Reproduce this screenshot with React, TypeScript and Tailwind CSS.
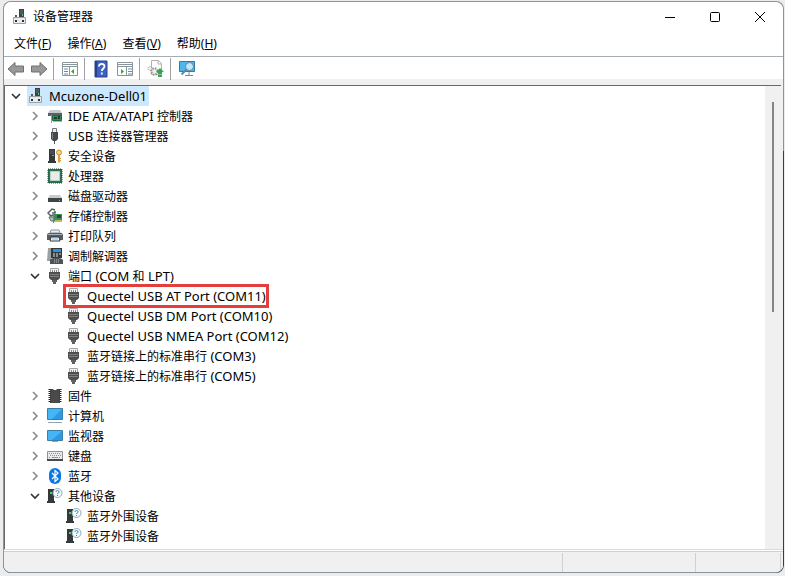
import React from 'react';

type IconName =
  | 'computerDevice'
  | 'ide'
  | 'usb'
  | 'security'
  | 'cpu'
  | 'disk'
  | 'storage'
  | 'printer'
  | 'modem'
  | 'port'
  | 'firmware'
  | 'computer'
  | 'monitor'
  | 'keyboard'
  | 'bluetooth'
  | 'unknown';

interface TreeItem {
  id: string;
  label: string;
  icon: IconName;
  highlighted?: boolean;
  children?: TreeItem[];
}

const devices: TreeItem[] = [
  { id: 'ide', label: 'IDE ATA/ATAPI 控制器', icon: 'ide' },
  { id: 'usb', label: 'USB 连接器管理器', icon: 'usb' },
  { id: 'security', label: '安全设备', icon: 'security' },
  { id: 'cpu', label: '处理器', icon: 'cpu' },
  { id: 'disk', label: '磁盘驱动器', icon: 'disk' },
  { id: 'storage', label: '存储控制器', icon: 'storage' },
  { id: 'printer', label: '打印队列', icon: 'printer' },
  { id: 'modem', label: '调制解调器', icon: 'modem' },
  {
    id: 'ports',
    label: '端口 (COM 和 LPT)',
    icon: 'port',
    children: [
      { id: 'com11', label: 'Quectel USB AT Port (COM11)', icon: 'port', highlighted: true },
      { id: 'com10', label: 'Quectel USB DM Port (COM10)', icon: 'port' },
      { id: 'com12', label: 'Quectel USB NMEA Port (COM12)', icon: 'port' },
      { id: 'com3', label: '蓝牙链接上的标准串行 (COM3)', icon: 'port' },
      { id: 'com5', label: '蓝牙链接上的标准串行 (COM5)', icon: 'port' },
    ],
  },
  { id: 'firmware', label: '固件', icon: 'firmware' },
  { id: 'computer', label: '计算机', icon: 'computer' },
  { id: 'monitor', label: '监视器', icon: 'monitor' },
  { id: 'keyboard', label: '键盘', icon: 'keyboard' },
  { id: 'bluetooth', label: '蓝牙', icon: 'bluetooth' },
  {
    id: 'other',
    label: '其他设备',
    icon: 'unknown',
    children: [
      { id: 'bt1', label: '蓝牙外围设备', icon: 'unknown' },
      { id: 'bt2', label: '蓝牙外围设备', icon: 'unknown' },
    ],
  },
];

const menus = [
  { text: '文件', hotkey: 'F' },
  { text: '操作', hotkey: 'A' },
  { text: '查看', hotkey: 'V' },
  { text: '帮助', hotkey: 'H' },
];

const iconShapes: Record<IconName, React.ReactNode> = {
  computerDevice: (
    <>
      <path d="M7 0h5v8H7z" fill="#3c4247" />
      <path d="M8 2h3M8 4h3" stroke="#6b7277" />
      <path d="M10 5h1v2h-1z" fill="#44d26b" />
      <path d="M3 6h2v3H3z" fill="#555b60" />
      <path d="M1.500 8.500h12v6h-12z" fill="#e9ebec" stroke="#9aa0a4" />
      <path d="M3 11h2v2H3zM10 11h2v2h-2z" fill="#2f3437" />
    </>
  ),
  ide: (
    <>
      <path d="M3 2h10l2 3H1z" fill="#c4c9cc" />
      <path d="M1 5h14v3H1z" fill="#5b6267" />
      <path d="M5.500 7.500h9v5h-9z" fill="#2f8f5b" stroke="#216843" />
      <path d="M7 9h3v2H7zM11 8h2v3h-2z" fill="#1d3d2c" />
      <path d="M6 13h9v1H6z" fill="#d3b64b" />
      <path d="M4 7h1v8H4z" fill="#9aa0a4" />
    </>
  ),
  usb: (
    <>
      <path d="M5.500.5h4v4h-4z" fill="#eee" stroke="#777" />
      <path d="M4 4h7v7l-2 2H6l-2-2z" fill="#44484b" />
      <path d="M5 5h1v6H5z" fill="#7f8487" />
      <path d="M7 13h1v3H7z" fill="#555" />
    </>
  ),
  security: (
    <>
      <path d="M2 1h6v12H2zM1 13h8v2H1z" fill="#34393c" />
      <path d="M3 3h4M3 5h4" stroke="#5d6468" />
      <path d="M5 7h2v1H5z" fill="#44d26b" />
      <circle cx="12" cy="4.500" r="2.500" fill="#f6d37a" stroke="#c8922d" />
      <path d="M11 7h2v7l-1 1-1-1z" fill="#d9a441" />
      <path d="M13 10h1v1h-1zM13 12h1v1h-1z" fill="#c8922d" />
    </>
  ),
  cpu: (
    <>
      <path d="M1 1h14v14H1z" fill="#2f7350" />
      <path d="M1 1h14v14H1z" fill="none" stroke="#1d4d35" strokeDasharray="1 1" />
      <path d="M3.500 3.500h9v9h-9z" fill="#e8ebec" stroke="#b8d0c4" />
    </>
  ),
  disk: (
    <>
      <path d="M3 7h10l2 3H1z" fill="#c8cbcd" />
      <path d="M1 10h14v4H1z" fill="#3f4447" />
      <path d="M12 12h1v1h-1z" fill="#5be07f" />
    </>
  ),
  storage: (
    <>
      <path d="M8 2 5 1 1 5l3 3 2-1M5 5h3V3" fill="none" stroke="#555c60" strokeWidth="1.500" />
      <path d="M2 9h5l2 4H4z" fill="#b7bdc0" stroke="#63696d" />
      <path d="M7 6h8v7H7z" fill="#3b8d5e" />
      <path d="M10 7h4v3h-4z" fill="#1d4d35" />
      <path d="M8 12h7v2H8z" fill="#d3b64b" />
      <path d="M6 6h1v9H6z" fill="#7a8185" />
    </>
  ),
  printer: (
    <>
      <path d="M4 2h8l1 3H3z" fill="#e4edf2" stroke="#8d9498" />
      <path d="M1 5h14l1 2v5H0V7z" fill="#565c60" />
      <path d="M1 6.500h14" stroke="#a9afb3" />
      <path d="M4 9h8l1 4H3z" fill="#f6f8f9" stroke="#34393c" />
      <path d="M5 11h6" stroke="#7eb8dd" />
    </>
  ),
  modem: (
    <>
      <path d="M4 0h11v10H4z" fill="#34393c" />
      <path d="M1 0h3v13H0z" fill="#9aa1a5" />
      <path d="M6 1h8v3H6z" fill="#2e8fe0" />
      <path d="M6 6h2M9 6h2M12 6h2M6 8h2M9 8h2" stroke="#dde1e3" />
      <path d="M3 12c1-3 11-3 13 0v4H3z" fill="#4d5357" />
      <path d="M7 12h5M7 14h5" stroke="#b8bec1" strokeDasharray="1 1" />
    </>
  ),
  port: (
    <>
      <path d="M3.500.5h8v4h-8z" fill="#f4f4f4" stroke="#a5a5a5" />
      <path d="M5 2h1v2H5zM7 2h1v2H7zM9 2h1v2H9z" fill="#888" />
      <path d="M2 4h11v6l-2 2H4l-2-2z" fill="#4e4e4e" />
      <path d="M3 6.500h9M3 8.500h9" stroke="#808080" />
      <path d="M5 12h5v2H5zM6 14h3v2H6z" fill="#606060" />
    </>
  ),
  firmware: (
    <>
      <path d="M3 1h3l1 1h2l1-1h3v14H3z" fill="#4a4a4a" />
      <path d="M2.500 1v14M13.500 1v14" stroke="#222" strokeWidth="2" strokeDasharray="1 1" />
    </>
  ),
  computer: (
    <>
      <path d="M.5.5h15v11H.5z" fill="#45b5f5" stroke="#3c7ea5" />
      <path d="M15 1v10H5z" fill="#2a9ae8" />
      <path d="M1 14.500h14" stroke="#90a4ae" />
    </>
  ),
  monitor: (
    <>
      <path d="M.5 2.500h15v10H.5z" fill="#45b5f5" stroke="#3c7ea5" />
      <path d="M15 3v9H5z" fill="#2a9ae8" />
      <path d="M5 13.500h6" stroke="#90a4ae" />
    </>
  ),
  keyboard: (
    <>
      <path d="M.5 3.500h15v8H.5z" fill="#e8eaeb" stroke="#8d9498" />
      <path d="M2 5.500h12M3 7.500h11M2 9.500h2M12 9.500h2" stroke="#8d9498" strokeDasharray="1 1" />
      <path d="M5 9.500h6" stroke="#8d9498" />
      <path d="M0 11h16v2H0z" fill="#454b4f" />
    </>
  ),
  bluetooth: (
    <>
      <rect x="2" y="0" width="12" height="16" rx="6" fill="#0a78e6" />
      <path d="m5 5 6 6-3 2.500v-11L11 5l-6 6" fill="none" stroke="#fff" strokeWidth="1.200" />
    </>
  ),
  unknown: (
    <>
      <path d="M1 1h6v12H1zM0 13h8v2H0z" fill="#34393c" />
      <path d="M3 4h2v2H3z" fill="#44d26b" />
      <circle cx="10.500" cy="5" r="4.500" fill="#f4fafd" stroke="#8fa9b8" />
      <path d="M9 4c0-2 3-2 3 0 0 1-1.500 1-1.500 2M10.500 7v1" fill="none" stroke="#2c7cae" />
    </>
  ),
};

const DeviceIcon: React.FC<{ name: IconName }> = ({ name }) => (
  <svg viewBox="0 0 16 16" className="w-4 h-4 shrink-0" aria-hidden="true">
    {iconShapes[name]}
  </svg>
);

const Chevron: React.FC<{ open?: boolean }> = ({ open }) => (
  <svg viewBox="0 0 12 12" className="w-3 h-3" fill="none" aria-hidden="true">
    {open ? (
      <path d="m2 4 4 4 4-4" stroke="#303030" strokeWidth="1.600" />
    ) : (
      <path d="m4 2 4 4-4 4" stroke="#8a8a8a" strokeWidth="1.600" />
    )}
  </svg>
);

// Latin runs are set one size larger than the Chinese ones
const Label: React.FC<{ text: string }> = ({ text }) => (
  <span className="whitespace-pre text-xs leading-5">
    {text.split(/([\u4e00-\u9fff]+)/).map((part, i) =>
      i % 2 ? part : <span key={i} className="text-[13px]">{part}</span>
    )}
  </span>
);

const TreeRow: React.FC<{ item: TreeItem; open: boolean; onToggle: (id: string) => void }> = ({
  item,
  open,
  onToggle,
}) => (
  <li>
    <div className="flex items-center h-5">
      <button
        aria-label={item.label}
        aria-expanded={open}
        onClick={() => onToggle(item.id)}
        className="w-5 flex justify-center mr-[2px]"
      >
        <Chevron open={open} />
      </button>
      <DeviceIcon name={item.icon} />
      <span className="ml-[5px] flex">
        <Label text={item.label} />
      </span>
    </div>
    {open && item.children && (
      <ul className="pl-[38px]">
        {item.children.map((child) => (
          <li key={child.id} className="flex h-5">
            <div
              className={
                child.highlighted
                  ? 'flex items-center gap-[5px] px-[3px] -my-[2px] outline-3 -outline-offset-3 outline-[#e53c3c]'
                  : 'flex items-center gap-[5px] px-[3px]'
              }
            >
              <DeviceIcon name={child.icon} />
              <Label text={child.label} />
            </div>
          </li>
        ))}
      </ul>
    )}
  </li>
);

const Divider = () => <span className="w-px h-[22px] ml-[4px] mr-[6px] bg-[#a0a0a0]" />;

const toolButton = 'w-5 h-5 flex items-center justify-center shrink-0';

const Toolbar: React.FC = () => (
  <div className="flex items-center h-[23px] pl-[2px] pt-[2px] bg-white border-t border-[#a5adb2]">
    <button className={toolButton} aria-label="后退">
      <svg viewBox="0 0 18 16" className="w-[18px] h-4">
        <path d="M1 8 8 1.500V5h8.500v6H8v3.500z" fill="#989898" stroke="#707070" />
      </svg>
    </button>
    <button className={`${toolButton} ml-[3px]`} aria-label="前进">
      <svg viewBox="0 0 18 16" className="w-[18px] h-4">
        <path d="m17 8-7-6.500V5H1.500v6H10v3.500z" fill="#989898" stroke="#707070" />
      </svg>
    </button>
    <Divider />
    <button className={toolButton} aria-label="显示控制台树">
      <svg viewBox="0 0 18 16" className="w-[18px] h-4">
        <path d="M1.500 1.500h15v13h-15z" fill="#fff" stroke="#8a949b" />
        <path d="M2 3.500h14M2 5.500h14M8.500 6v9" stroke="#8a949b" />
        <path d="M3 8h4M3 10.500h4M3 13h4" stroke="#5f8fb5" />
        <path d="M13 8v5l-3-2.500z" fill="#36a43b" />
      </svg>
    </button>
    <Divider />
    <button className={toolButton} aria-label="帮助">
      <svg viewBox="0 0 16 18" className="w-4 h-[18px]">
        <path d="M2 1h12v16H2z" fill="#3b62c4" stroke="#24408f" />
        <path d="M2 1h2v16H2z" fill="#24408f" />
        <path d="M6 6.500c0-3.500 5.500-3.500 5.500 0 0 2-2.700 2-2.700 4.500M8.800 12.500v2" fill="none" stroke="#fff" strokeWidth="1.800" />
      </svg>
    </button>
    <button className={`${toolButton} ml-[4px]`} aria-label="属性">
      <svg viewBox="0 0 18 16" className="w-[18px] h-4">
        <path d="M1.500 1.500h15v13h-15z" fill="#fff" stroke="#8a949b" />
        <path d="M2 3.500h14M2 5.500h14M10.500 6v9" stroke="#8a949b" />
        <path d="M12 8h4M12 10.500h4M12 13h4" stroke="#5f8fb5" />
        <path d="M5 8v5l3-2.500z" fill="#36a43b" />
      </svg>
    </button>
    <Divider />
    <button className={toolButton} aria-label="更新驱动程序">
      <svg viewBox="0 0 18 18" className="w-[18px] h-[18px]">
        <path d="M4.500.5h7l3 3v11h-10z" fill="#fff" stroke="#b0b0b0" />
        <path d="M11 0v4h4" fill="none" stroke="#b0b0b0" />
        <circle cx="7.500" cy="11.500" r="3.200" fill="#eee" stroke="#8f8f8f" strokeWidth="2" strokeDasharray="1.500 1" />
        <circle cx="3" cy="8.500" r="2" fill="#eee" stroke="#8f8f8f" strokeDasharray="1 1" />
        <path d="m13 8 4 4h-2v2h-4v-2H9zM11 15h4v2h-4z" fill="#2daa48" />
      </svg>
    </button>
    <Divider />
    <button className={toolButton} aria-label="扫描检测硬件改动">
      <svg viewBox="0 0 18 18" className="w-[18px] h-[18px]">
        <path d="M1.500 1.500h15v10h-15z" fill="#4bb8ee" stroke="#2f7ca8" />
        <path d="M7 15.500h8M11 12v3" stroke="#6f8c9c" />
        <circle cx="11.500" cy="6.500" r="4" fill="#bfe9fa" stroke="#5f8799" />
        <path d="m8.500 9.500-5 5" stroke="#5f8799" strokeWidth="1.800" />
      </svg>
    </button>
  </div>
);

const TitleBar: React.FC = () => (
  <header className="flex items-center h-[30px] pr-px bg-white">
    <div className="flex items-center gap-[5px] pl-[8px] grow">
      <DeviceIcon name="computerDevice" />
      <h1 className="text-xs">设备管理器</h1>
    </div>
    <div className="flex">
      <button className="w-[45px] h-[30px] flex items-center justify-center" aria-label="最小化">
        <svg viewBox="0 0 12 12" className="w-3 h-3"><path d="M1 6.500h10" stroke="#000" /></svg>
      </button>
      <button className="w-[45px] h-[30px] flex items-center justify-center" aria-label="最大化">
        <svg viewBox="0 0 12 12" className="w-3 h-3">
          <rect x="1.500" y="1.500" width="9" height="9" rx="1" fill="none" stroke="#000" />
        </svg>
      </button>
      <button className="w-[45px] h-[30px] flex items-center justify-center" aria-label="关闭">
        <svg viewBox="0 0 12 12" className="w-3 h-3"><path d="m1 1 10 10M11 1 1 11" stroke="#000" /></svg>
      </button>
    </div>
  </header>
);

export default function App() {
  const [rootOpen, setRootOpen] = React.useState(true);
  const [open, setOpen] = React.useState<string[]>(['ports', 'other']);

  const toggle = (id: string) =>
    setOpen((prev) => (prev.includes(id) ? prev.filter((x) => x !== id) : [...prev, id]));

  return (
    <div className="min-h-screen flex flex-col bg-[#ececec] pl-[3px] pr-px pt-px pb-[3px] text-black font-['Noto_Sans','Noto_Sans_CJK_SC',sans-serif]">
      {/* The window edge turns dark below the toolbar on the right side */}
      <div className="grow flex flex-col rounded-lg overflow-hidden pr-px bg-[linear-gradient(#8795a0_150px,#3c3c3c_150px)]">
        <div className="grow flex flex-col rounded-lg overflow-hidden border-y border-l border-[#8795a0] bg-[#f0f0f0]">
          <TitleBar />
          <nav className="flex items-center gap-4 h-[24px] pl-[10px] bg-white">
            {menus.map((menu) => (
              <button key={menu.hotkey} className="text-xs leading-5">
                {menu.text}(<u>{menu.hotkey}</u>)
              </button>
            ))}
          </nav>
          <Toolbar />

          {/* Device tree */}
          <main className="grow flex mt-[6px] mr-[2px] bg-white border-t border-l border-[#696969]">
            <div className="grow">
              <div className="flex items-center h-5">
                <button
                  aria-label="Mcuzone-Dell01"
                  aria-expanded={rootOpen}
                  onClick={() => setRootOpen(!rootOpen)}
                  className="w-[22px] flex justify-center"
                >
                  <Chevron open={rootOpen} />
                </button>
                <div className="flex items-center gap-[5px] h-5 pl-px pr-[2px] bg-[#cce8ff]">
                  <DeviceIcon name="computerDevice" />
                  <Label text="Mcuzone-Dell01" />
                </div>
              </div>
              {rootOpen && (
                <ul className="pl-[20px]">
                  {devices.map((item) => (
                    <TreeRow
                      key={item.id}
                      item={item}
                      open={open.includes(item.id)}
                      onToggle={toggle}
                    />
                  ))}
                </ul>
              )}
            </div>
            <div className="w-4 flex justify-center py-4 bg-[#f0f0f0]">
              <div className="w-[2px] h-[210px] bg-[#858585]" />
            </div>
          </main>

          {/* Status bar */}
          <footer className="border-t border-[#d9d9d9] pt-px bg-white">
            <div className="flex h-[21px] pt-px bg-[#f0f0f0] border-t border-[#cfcfcf]">
              <span className="grow" />
              <span className="w-[133px] border-l border-[#d0d0d0]" />
              <span className="w-[86px] border-x border-[#d0d0d0]" />
              <span className="w-[2px]" />
            </div>
          </footer>
        </div>
      </div>
    </div>
  );
}
